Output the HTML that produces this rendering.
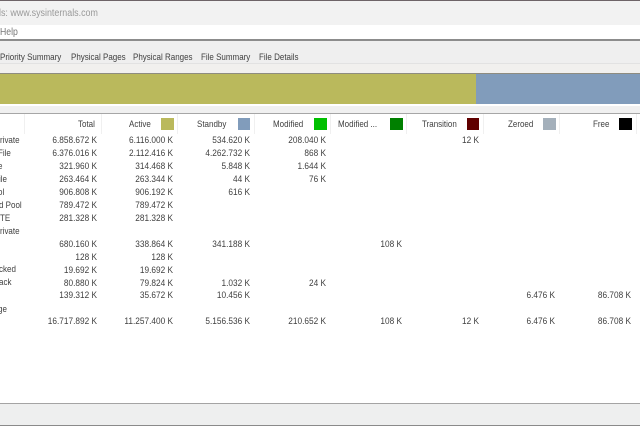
<!DOCTYPE html>
<html><head><meta charset="utf-8"><style>
html,body{margin:0;padding:0;width:640px;height:426px;overflow:hidden;background:#fff}
body{position:relative;font-family:"Liberation Sans",sans-serif;font-size:9.2px;color:#404040}
div{position:absolute}
.t{white-space:nowrap;line-height:12px;filter:blur(.3px);transform:scaleX(.87);transform-origin:0 50%}
.r{white-space:nowrap;line-height:12px;text-align:right;width:90px;filter:blur(.3px);transform:scaleX(.9);transform-origin:100% 50%}
.s{width:12.5px;height:12.5px;top:117.5px}
.l{width:1px;top:114px;height:20px;background:#f0f0f0}
</style></head><body>
<div style="left:0;top:0;width:640px;height:1px;background:#6e6468"></div>
<div style="left:0;top:1px;width:640px;height:24px;background:#f2f2f2"></div>
<div class="t" style="left:-1px;top:7.5px;font-size:10px;color:#999;transform:scaleX(.89)">ls: www.sysinternals.com</div>
<div style="left:0;top:25px;width:640px;height:14px;background:#fff"></div>
<div class="t" style="left:0;top:26.5px;font-size:10px;color:#777">Help</div>
<div style="left:0;top:39px;width:640px;height:2px;background:#8c8c8c"></div>
<div style="left:0;top:41px;width:640px;height:22px;background:#efefef"></div>
<div style="left:0;top:63px;width:640px;height:1px;background:#e2e2e2"></div>
<div style="left:0;top:64px;width:640px;height:9px;background:#f1f0ee"></div>
<div class="t" style="left:0;top:51px">Priority Summary</div>
<div class="t" style="left:71px;top:51px">Physical Pages</div>
<div class="t" style="left:133px;top:51px">Physical Ranges</div>
<div class="t" style="left:201px;top:51px">File Summary</div>
<div class="t" style="left:259px;top:51px">File Details</div>
<div style="left:0;top:73px;width:640px;height:1px;background:#8e8c80"></div>
<div style="left:0;top:74px;width:476px;height:30px;background:#bab95c"></div>
<div style="left:476px;top:74px;width:164px;height:30px;background:#819cbb"></div>
<div style="left:0;top:104px;width:640px;height:2px;background:#fff"></div>
<div style="left:0;top:106px;width:640px;height:7px;background:#f0f0f0"></div>
<div style="left:0;top:113px;width:640px;height:1px;background:#a6a6a6"></div>

<div class="l" style="left:24px"></div><div class="l" style="left:101px"></div><div class="l" style="left:177px"></div><div class="l" style="left:254px"></div><div class="l" style="left:330px"></div><div class="l" style="left:406px"></div><div class="l" style="left:483px"></div><div class="l" style="left:559px"></div><div class="l" style="left:636px"></div>

<div class="t" style="left:78px;top:118px">Total</div>
<div class="t" style="left:129px;top:118px">Active</div>
<div class="t" style="left:197px;top:118px">Standby</div>
<div class="t" style="left:273px;top:118px">Modified</div>
<div class="t" style="left:338px;top:118px">Modified ...</div>
<div class="t" style="left:422px;top:118px">Transition</div>
<div class="t" style="left:508px;top:118px">Zeroed</div>
<div class="t" style="left:593px;top:118px">Free</div>
<div class="s" style="left:161px;background:#bab95c"></div>
<div class="s" style="left:237.5px;background:#819cbb"></div>
<div class="s" style="left:314px;background:#00c000"></div>
<div class="s" style="left:390px;background:#008000"></div>
<div class="s" style="left:466.5px;background:#600000"></div>
<div class="s" style="left:543px;background:#a4b0bb"></div>
<div class="s" style="left:619px;background:#000"></div>

<div class="t" style="left:0;top:134px">rivate</div>
<div class="t" style="left:-2px;top:147px">File</div>
<div class="t" style="left:-2px;top:160px">e</div>
<div class="t" style="left:-1px;top:173px">ile</div>
<div class="t" style="left:-2px;top:186px">ol</div>
<div class="t" style="left:-1px;top:199px">d Pool</div>
<div class="t" style="left:0;top:212px">TE</div>
<div class="t" style="left:0;top:225px">rivate</div>
<div class="t" style="left:-1px;top:263px">cked</div>
<div class="t" style="left:-1px;top:276px">ack</div>
<div class="t" style="left:-2px;top:303px">ge</div>

<div class="r" style="left:7px;top:134px">6.858.672 K</div><div class="r" style="left:83px;top:134px">6.116.000 K</div><div class="r" style="left:160px;top:134px">534.620 K</div><div class="r" style="left:236px;top:134px">208.040 K</div><div class="r" style="left:389px;top:134px">12 K</div>
<div class="r" style="left:7px;top:147px">6.376.016 K</div><div class="r" style="left:83px;top:147px">2.112.416 K</div><div class="r" style="left:160px;top:147px">4.262.732 K</div><div class="r" style="left:236px;top:147px">868 K</div>
<div class="r" style="left:7px;top:160px">321.960 K</div><div class="r" style="left:83px;top:160px">314.468 K</div><div class="r" style="left:160px;top:160px">5.848 K</div><div class="r" style="left:236px;top:160px">1.644 K</div>
<div class="r" style="left:7px;top:173px">263.464 K</div><div class="r" style="left:83px;top:173px">263.344 K</div><div class="r" style="left:160px;top:173px">44 K</div><div class="r" style="left:236px;top:173px">76 K</div>
<div class="r" style="left:7px;top:186px">906.808 K</div><div class="r" style="left:83px;top:186px">906.192 K</div><div class="r" style="left:160px;top:186px">616 K</div>
<div class="r" style="left:7px;top:199px">789.472 K</div><div class="r" style="left:83px;top:199px">789.472 K</div>
<div class="r" style="left:7px;top:212px">281.328 K</div><div class="r" style="left:83px;top:212px">281.328 K</div>
<div class="r" style="left:7px;top:238px">680.160 K</div><div class="r" style="left:83px;top:238px">338.864 K</div><div class="r" style="left:160px;top:238px">341.188 K</div><div class="r" style="left:312px;top:238px">108 K</div>
<div class="r" style="left:7px;top:251px">128 K</div><div class="r" style="left:83px;top:251px">128 K</div>
<div class="r" style="left:7px;top:264px">19.692 K</div><div class="r" style="left:83px;top:264px">19.692 K</div>
<div class="r" style="left:7px;top:277px">80.880 K</div><div class="r" style="left:83px;top:277px">79.824 K</div><div class="r" style="left:160px;top:277px">1.032 K</div><div class="r" style="left:236px;top:277px">24 K</div>
<div class="r" style="left:7px;top:289px">139.312 K</div><div class="r" style="left:83px;top:289px">35.672 K</div><div class="r" style="left:160px;top:289px">10.456 K</div><div class="r" style="left:465px;top:289px">6.476 K</div><div class="r" style="left:541px;top:289px">86.708 K</div>
<div class="r" style="left:7px;top:315px">16.717.892 K</div><div class="r" style="left:83px;top:315px">11.257.400 K</div><div class="r" style="left:160px;top:315px">5.156.536 K</div><div class="r" style="left:236px;top:315px">210.652 K</div><div class="r" style="left:312px;top:315px">108 K</div><div class="r" style="left:389px;top:315px">12 K</div><div class="r" style="left:465px;top:315px">6.476 K</div><div class="r" style="left:541px;top:315px">86.708 K</div>

<div style="left:0;top:403px;width:640px;height:1px;background:#a4a4a4"></div>
<div style="left:0;top:404px;width:640px;height:21px;background:#eeefef"></div>
<div style="left:0;top:425px;width:640px;height:1px;background:#8a8a8a"></div>
</body></html>
